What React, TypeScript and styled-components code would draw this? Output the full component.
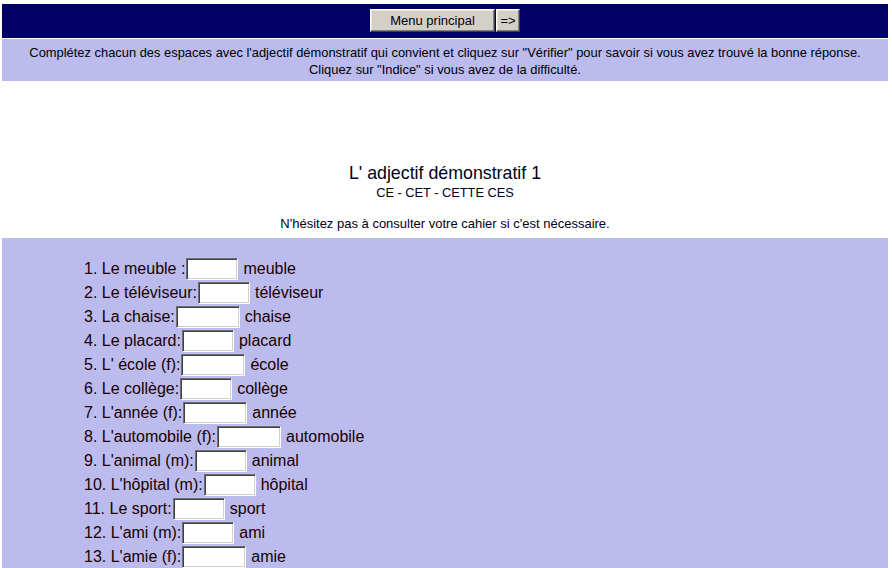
import React from "react";
import styled, { createGlobalStyle } from "styled-components";

const Global = createGlobalStyle`
  html, body { margin: 0; padding: 0; background: #ffffff; }
  body { font-family: "Liberation Sans", Arial, sans-serif; color: #000000; }
`;

const Page = styled.div`
  padding: 4px 4px 0 2px;
  display: flex;
  flex-direction: column;
`;

const TopBar = styled.div`
  height: 34px;
  background: #000066;
  display: flex;
  justify-content: center;
  align-items: flex-start;
  padding-top: 5px;
  box-sizing: border-box;
  gap: 1px;
`;

const NavButton = styled.button<{ $w: number }>`
  width: ${(p) => p.$w}px;
  height: 23px;
  margin: 0;
  padding: 0;
  background: #d4d0c8;
  font-family: "Liberation Sans", Arial, sans-serif;
  font-size: 13px;
  color: #000;
  border: 1px solid;
  border-color: #ffffff #404040 #404040 #ffffff;
  box-shadow: inset -1px -1px 0 #808080, inset 1px 1px 0 #e8e6e0;
`;

const Instructions = styled.div`
  margin-top: 1px;
  height: 42px;
  background: #bbbbee;
  display: flex;
  flex-direction: column;
  justify-content: center;
  align-items: center;
  font-size: 12.9px;
  line-height: 17px;
  padding-top: 2px;
  box-sizing: border-box;
`;

const Intro = styled.div`
  height: 157px;
  display: flex;
  flex-direction: column;
  align-items: center;
  padding-top: 83px;
  box-sizing: border-box;
  color: #000022;
`;

const Title = styled.div`
  font-size: 17.8px;
  line-height: 19px;
`;

const Sub = styled.div`
  font-size: 12.8px;
  line-height: 15px;
  margin-top: 2px;
`;

const Note = styled.div`
  font-size: 13px;
  line-height: 15px;
  margin-top: 16px;
`;

const ListSection = styled.div`
  background: #bbbbee;
  min-height: 330px;
  padding: 19px 0 0 82px;
  display: flex;
  flex-direction: column;
`;

const Row = styled.div`
  height: 24px;
  display: flex;
  align-items: center;
  font-size: 16px;
  color: #1a0000;
  white-space: pre;
`;

const Field = styled.input<{ $w: number }>`
  width: ${(p) => p.$w}px;
  height: 22px;
  box-sizing: border-box;
  margin: 0 5px 0 1px;
  padding: 0 2px;
  background: #ffffff;
  border: 1px solid;
  border-color: #707070 #ffffff #ffffff #707070;
  box-shadow: inset 1px 1px 0 #404040, inset -1px -1px 0 #d4d0c8;
  font-family: "Liberation Sans", Arial, sans-serif;
  font-size: 13px;
  outline: none;
`;

const items: [string, number, string][] = [
  ["1. Le meuble :", 52, "meuble"],
  ["2. Le téléviseur:", 52, "téléviseur"],
  ["3. La chaise:", 64, "chaise"],
  ["4. Le placard:", 52, "placard"],
  ["5. L' école (f):", 64, "école"],
  ["6. Le collège:", 52, "collège"],
  ["7. L'année (f):", 64, "année"],
  ["8. L'automobile (f):", 64, "automobile"],
  ["9. L'animal (m):", 52, "animal"],
  ["10. L'hôpital (m):", 52, "hôpital"],
  ["11. Le sport:", 52, "sport"],
  ["12. L'ami (m):", 52, "ami"],
  ["13. L'amie (f):", 64, "amie"],
];

export default function App() {
  return (
    <>
      <Global />
      <Page>
        <TopBar>
          <NavButton $w={125}>Menu principal</NavButton>
          <NavButton $w={24}>=&gt;</NavButton>
        </TopBar>
        <Instructions>
          <div>
            Complétez chacun des espaces avec l'adjectif démonstratif qui convient et cliquez sur "Vérifier" pour savoir si vous avez trouvé la bonne réponse.
          </div>
          <div>Cliquez sur "Indice" si vous avez de la difficulté.</div>
        </Instructions>
        <Intro>
          <Title>L' adjectif démonstratif 1</Title>
          <Sub>CE - CET - CETTE CES</Sub>
          <Note>N'hésitez pas à consulter votre cahier si c'est nécessaire.</Note>
        </Intro>
        <ListSection>
          {items.map(([label, w, after]) => (
            <Row key={label}>
              {label}
              <Field $w={w} type="text" />
              {after}
            </Row>
          ))}
        </ListSection>
      </Page>
    </>
  );
}
